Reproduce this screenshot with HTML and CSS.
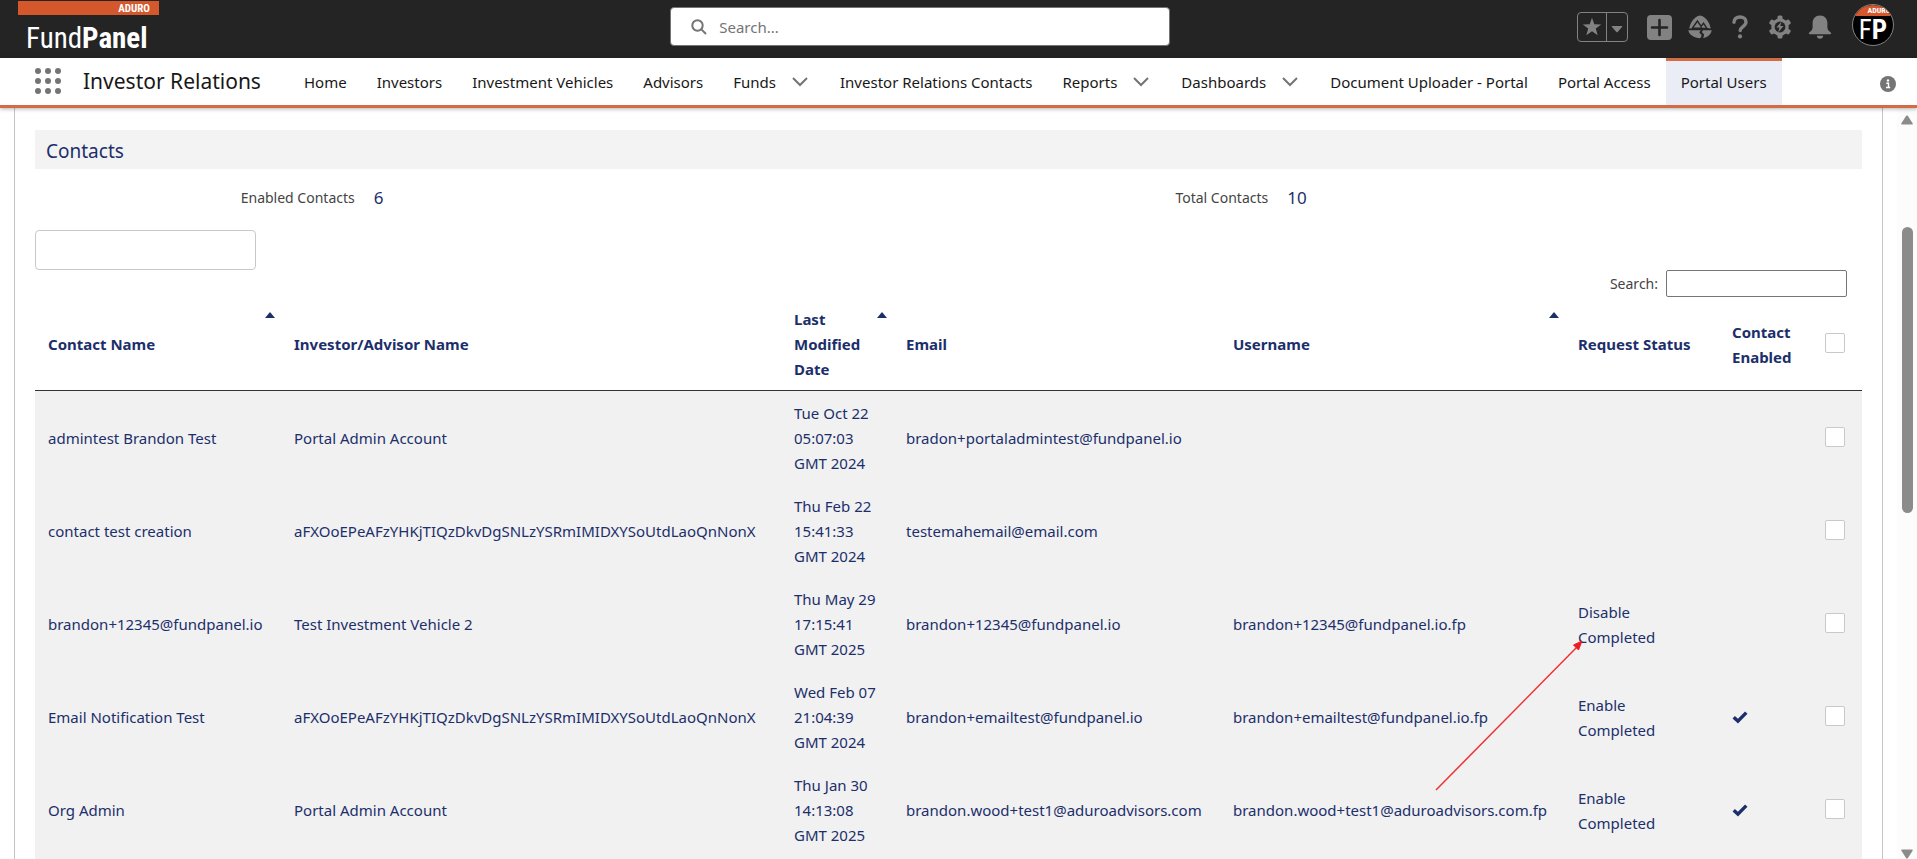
FILE: index.html
```html
<!DOCTYPE html>
<html lang="en">
<head>
  <meta charset="utf-8">
  <title>Portal Users | FundPanel</title>
  <link rel="stylesheet" href="styles.css">
</head>
<body>
  <header class="topbar">
    <a class="logo" href="#">
      <span class="logo-tag">ADURO</span>
      <span class="logo-name">Fund<b>Panel</b></span>
    </a>
    <div class="global-search">
      <svg width="16" height="16" viewBox="0 0 16 16" fill="none" stroke="#747474" stroke-width="2"><circle cx="6.5" cy="6.5" r="5.2"/><path d="M10.4 10.4L15 15"/></svg>
      <input type="text" placeholder="Search..." aria-label="Search">
    </div>
    <div class="actions">
      <div class="favorites">
        <button class="icon-button" aria-label="Favorites">
          <svg width="20" height="20" viewBox="0 0 20 20"><path fill="#828282" d="M10 0.8l2.3 6.4 6.9.2-5.4 4.2 1.9 6.6L10 14.3l-5.7 3.9 1.9-6.6L.8 7.4l6.9-.2z"/></svg>
        </button>
        <button class="icon-button" aria-label="Favorites list">
          <svg width="12" height="8" viewBox="0 0 12 8"><path fill="#828282" d="M1.2 1h9.6q1 0 .4.8L6.7 7q-.7.7-1.4 0L.8 1.8Q.2 1 1.2 1z"/></svg>
        </button>
      </div>
      <button class="icon-button" aria-label="Global actions">
        <svg width="25" height="25" viewBox="0 0 25 25"><rect width="25" height="25" rx="4" fill="#828282"/><path d="M12.5 5v15M5 12.500h15" stroke="#242424" stroke-width="2.600" stroke-linecap="round"/></svg>
      </button>
      <button class="icon-button" aria-label="Guidance center">
        <svg width="24" height="24" viewBox="0 0 24 24"><path fill="#828282" d="M1.300 13.500C2.200 7.500 6.500 1.500 12 .6c5.500.9 9.800 6.900 10.700 12.900L19.500 13l-4-6-2.300 3.300L9.400 4.800 3.300 13.500z"/><path fill="#828282" d="M9.400 7.200l3.600 5.300H5.800zM15.500 9.400l2.200 3.300h-3.500l-.6-.9z"/><path fill="#828282" d="M.3 15.200h12.600c-2 1.700-1.800 2.700-.2 3.800 1.300 1 1 2.300-.6 4.300C6 22.600 1.200 20 .3 15.200zM15.200 15.200h8.500c-.6 4.300-4.400 7.200-8.700 7.800 1.600-2.600 1.400-3.700-.3-4.900-1-.8-.9-1.700.5-2.900z"/></svg>
      </button>
      <button class="icon-button" aria-label="Help">
        <svg width="24" height="24" viewBox="0 0 24 24"><path fill="none" stroke="#828282" stroke-width="3.400" stroke-linecap="round" d="M6 7.200C6 3.800 8.500 2 12 2s6 2 6 5c0 4.500-5.800 4.600-5.800 8.600"/><circle cx="12" cy="21.400" r="2.100" fill="#828282"/></svg>
      </button>
      <button class="icon-button" aria-label="Setup">
        <svg width="24" height="24" viewBox="0 0 24 24"><g fill="#828282"><circle cx="12" cy="12" r="8.700"/><rect x="9.500" y=".5" width="5" height="23" rx="1.500"/><rect x="9.500" y=".5" width="5" height="23" rx="1.500" transform="rotate(60 12 12)"/><rect x="9.500" y=".5" width="5" height="23" rx="1.500" transform="rotate(120 12 12)"/></g><circle cx="12" cy="12" r="5.400" fill="#242424"/><path fill="#828282" d="M13.500 6.500L8.500 12.600h3l-1.300 4.900 5.300-6.400h-3.200z"/></svg>
      </button>
      <button class="icon-button" aria-label="Notifications">
        <svg width="24" height="24" viewBox="0 0 24 24"><path fill="#828282" d="M12 .5c4.600 0 7.400 3.500 7.400 7.500v4c0 2.800 1 3.800 2.800 4.900 1.400.9 1.300 2.300-.2 2.300H2c-1.500 0-1.600-1.400-.2-2.300 1.800-1.100 2.800-2.100 2.800-4.900V8C4.600 4 7.400.5 12 .5zM8.800 20.700h6.400c0 1.900-1.400 3-3.200 3s-3.200-1.100-3.200-3z"/></svg>
      </button>
      <button class="avatar" aria-label="View profile">
        <span class="avatar-tag">ADURO</span>
        <span class="avatar-name">F<b>P</b></span>
      </button>
    </div>
  </header>

  <nav class="navbar">
    <button class="launcher" aria-label="App launcher">
      <i></i><i></i><i></i><i></i><i></i><i></i><i></i><i></i><i></i>
    </button>
    <span class="app-name">Investor Relations</span>
    <a class="tab" href="#">Home</a>
    <a class="tab" href="#">Investors</a>
    <a class="tab" href="#">Investment Vehicles</a>
    <a class="tab" href="#">Advisors</a>
    <a class="tab" href="#">Funds <svg class="chevron" viewBox="0 0 16 10"><path d="M1 1l7 7 7-7"/></svg></a>
    <a class="tab" href="#">Investor Relations Contacts</a>
    <a class="tab" href="#">Reports <svg class="chevron" viewBox="0 0 16 10"><path d="M1 1l7 7 7-7"/></svg></a>
    <a class="tab" href="#">Dashboards <svg class="chevron" viewBox="0 0 16 10"><path d="M1 1l7 7 7-7"/></svg></a>
    <a class="tab" href="#">Document Uploader - Portal</a>
    <a class="tab" href="#">Portal Access</a>
    <a class="tab active" href="#">Portal Users</a>
    <button class="info" aria-label="Information">
      <svg width="16" height="16" viewBox="0 0 16 16"><circle cx="8" cy="8" r="8" fill="#747474"/><circle cx="8" cy="4.500" r="1.200" fill="#fff"/><path d="M6.300 7.300h2.200v4M6 11.500h4.200" stroke="#fff" stroke-width="1.400" fill="none"/></svg>
    </button>
  </nav>

  <main class="page">
    <div class="card">
      <h2 class="section-title">Contacts</h2>
      <dl class="summary">
        <div class="summary-item"><dt>Enabled Contacts</dt><dd>6</dd></div>
        <div class="summary-item"><dt>Total Contacts</dt><dd>10</dd></div>
      </dl>
      <input class="filter" type="text" aria-label="Filter">
      <div class="table-search">
        <label for="search">Search:</label>
        <input id="search" type="search">
      </div>
      <table class="contacts">
        <colgroup>
          <col class="col-name">
          <col class="col-investor">
          <col class="col-date">
          <col class="col-email">
          <col class="col-username">
          <col class="col-status">
          <col class="col-enabled">
          <col class="col-select">
        </colgroup>
        <thead>
          <tr>
            <th class="sorted">Contact Name</th>
            <th>Investor/Advisor Name</th>
            <th class="sorted">Last Modified Date</th>
            <th>Email</th>
            <th class="sorted">Username</th>
            <th>Request Status</th>
            <th>Contact Enabled</th>
            <th><input type="checkbox" aria-label="Select all"></th>
          </tr>
        </thead>
        <tbody>
          <tr>
            <td>admintest Brandon Test</td>
            <td>Portal Admin Account</td>
            <td>Tue Oct 22<br>05:07:03<br>GMT 2024</td>
            <td>bradon+portaladmintest@fundpanel.io</td>
            <td></td>
            <td></td>
            <td></td>
            <td><input type="checkbox" aria-label="Select admintest Brandon Test"></td>
          </tr>
          <tr>
            <td>contact test creation</td>
            <td>aFXOoEPeAFzYHKjTIQzDkvDgSNLzYSRmIMIDXYSoUtdLaoQnNonX</td>
            <td>Thu Feb 22<br>15:41:33<br>GMT 2024</td>
            <td>testemahemail@email.com</td>
            <td></td>
            <td></td>
            <td></td>
            <td><input type="checkbox" aria-label="Select contact test creation"></td>
          </tr>
          <tr>
            <td>brandon+12345@fundpanel.io</td>
            <td>Test Investment Vehicle 2</td>
            <td>Thu May 29<br>17:15:41<br>GMT 2025</td>
            <td>brandon+12345@fundpanel.io</td>
            <td>brandon+12345@fundpanel.io.fp</td>
            <td>Disable<br>Completed</td>
            <td></td>
            <td><input type="checkbox" aria-label="Select brandon+12345@fundpanel.io"></td>
          </tr>
          <tr>
            <td>Email Notification Test</td>
            <td>aFXOoEPeAFzYHKjTIQzDkvDgSNLzYSRmIMIDXYSoUtdLaoQnNonX</td>
            <td>Wed Feb 07<br>21:04:39<br>GMT 2024</td>
            <td>brandon+emailtest@fundpanel.io</td>
            <td>brandon+emailtest@fundpanel.io.fp</td>
            <td>Enable<br>Completed</td>
            <td><svg class="check" viewBox="0 0 14 12"><path d="M1.500 6.200l3.700 3.400 7.300-7.400"/></svg></td>
            <td><input type="checkbox" aria-label="Select Email Notification Test"></td>
          </tr>
          <tr>
            <td>Org Admin</td>
            <td>Portal Admin Account</td>
            <td>Thu Jan 30<br>14:13:08<br>GMT 2025</td>
            <td>brandon.wood+test1@aduroadvisors.com</td>
            <td>brandon.wood+test1@aduroadvisors.com.fp</td>
            <td>Enable<br>Completed</td>
            <td><svg class="check" viewBox="0 0 14 12"><path d="M1.500 6.200l3.700 3.400 7.300-7.400"/></svg></td>
            <td><input type="checkbox" aria-label="Select Org Admin"></td>
          </tr>
        </tbody>
      </table>
    </div>
    <div class="scrollbar">
      <svg width="12" height="10" viewBox="0 0 12 10"><path fill="#8b8b8b" d="M5.200.8q.8-.8 1.600 0l4.800 7.400q.5 1.300-.6 1.300H1Q-.1 9.500.4 8.200z"/></svg>
      <div class="track"><div class="thumb"></div></div>
      <svg width="12" height="10" viewBox="0 0 12 10"><path fill="#8b8b8b" d="M5.200 9.200q.8.800 1.600 0l4.800-7.400Q12.100.5 11 .5H1Q-.1.500.4 1.800z"/></svg>
    </div>
  </main>

  <!-- pointer to the request status -->
  <svg class="pointer" width="150" height="152" viewBox="0 0 150 152">
    <path d="M1 150L142 7" stroke="#f03030" stroke-width="1.500"/>
    <path d="M147 1l-8.500 4 5 5z" fill="#ed1c24" stroke="#ed1c24"/>
  </svg>
</body>
</html>
```
FILE: styles.css
```css
* {
  box-sizing: border-box;
}

body {
  margin: 0;
  height: 100vh;
  display: flex;
  flex-direction: column;
  overflow: hidden;
  background: #fff;
  color: #181818;
  font-family: "Noto Sans", "Open Sans", sans-serif;
  font-size: 14px;
}

button {
  padding: 0;
  border: 0;
  background: none;
  font: inherit;
  cursor: pointer;
}

a {
  color: inherit;
  text-decoration: none;
}

svg {
  display: block;
}

/* top bar */
.topbar {
  flex: none;
  height: 58px;
  display: grid;
  grid-template-columns: 473fr 500px 527fr;
  background: #242424;
}

.logo {
  padding-left: 18px;
  padding-top: 1px;
  color: #fff;
  font-family: "Liberation Sans Narrow", "Roboto Condensed", "Liberation Sans", sans-serif;
}

.logo-tag {
  display: block;
  width: 141px;
  height: 14px;
  padding-right: 9px;
  background: #d4582c;
  font-size: 11px;
  font-weight: bold;
  line-height: 15px;
  text-align: right;
}

.logo-name {
  display: block;
  padding-left: 8px;
  font-size: 29px;
  line-height: 46px;
}

.global-search {
  height: 39px;
  margin-top: 7px;
  padding: 0 20px;
  display: flex;
  align-items: center;
  gap: 12px;
  background: #fff;
  border: 1px solid #747474;
  border-radius: 4px;
}

.global-search input {
  flex: 1;
  padding: 0;
  border: 0;
  outline: 0;
  font: inherit;
  font-size: 15px;
}

.global-search input::placeholder {
  color: #747474;
}

.actions {
  height: 54px;
  display: flex;
  justify-content: flex-end;
  align-items: center;
  gap: 16px;
  padding-right: 23px;
}

.favorites {
  display: flex;
  height: 30px;
  border: 1px solid #828282;
  border-radius: 4px;
  margin-right: 3px;
}

.favorites .icon-button {
  width: 28px;
  display: flex;
  justify-content: center;
  align-items: center;
}

.favorites .icon-button + .icon-button {
  width: 21px;
  padding-top: 4px;
  border-left: 1px solid #828282;
}

.avatar {
  width: 42px;
  height: 42px;
  margin-left: 4px;
  margin-bottom: 4px;
  overflow: hidden;
  background: #000;
  border: 1px solid #828282;
  border-radius: 50%;
  color: #fff;
  font-family: "Liberation Sans Narrow", "Roboto Condensed", "Liberation Sans", sans-serif;
}

.avatar-tag {
  display: block;
  height: 11px;
  padding-left: 12px;
  background: #d4582c;
  font-size: 8px;
  font-weight: bold;
  line-height: 11px;
}

.avatar-name {
  display: block;
  font-size: 27px;
  line-height: 29px;
}

/* navigation */
.navbar {
  flex: none;
  height: 50px;
  display: flex;
  align-items: stretch;
  padding-left: 35px;
  padding-right: 21px;
  border-bottom: 3px solid #d46c43;
  box-shadow: 0 1px 4px rgba(0, 0, 0, 0.3);
  position: relative;
}

.launcher {
  display: grid;
  grid-template-columns: repeat(3, 6px);
  gap: 4px;
  align-content: center;
  padding-bottom: 2px;
}

.launcher i {
  width: 6px;
  height: 6px;
  border-radius: 50%;
  background: #747474;
}

.app-name {
  width: 228px;
  padding-left: 22px;
  font-size: 21px;
  line-height: 47px;
  white-space: nowrap;
}

.tab {
  display: flex;
  align-items: center;
  padding: 0 15px;
  border-top: 3px solid transparent;
  padding-bottom: 3px;
  font-size: 15px;
  white-space: nowrap;
}

.tab.active {
  background: #eaedf6;
  border-top-color: #d46c43;
}

.chevron {
  width: 16px;
  height: 10px;
  margin-left: 16px;
  margin-right: 2px;
  fill: none;
  stroke: #747474;
  stroke-width: 2;
}

.info {
  margin-left: auto;
  padding-top: 5px;
}

/* page */
.page {
  flex: 1;
  min-height: 0;
  display: flex;
  padding-left: 14px;
}

.card {
  flex: 1;
  overflow: hidden;
  margin-right: 14px;
  padding: 22px 20px 0;
  border-left: 1px solid #c4c4c4;
  border-right: 1px solid #c4c4c4;
}

.section-title {
  margin: 0;
  padding-top: 3px;
  padding-left: 11px;
  background: #f3f3f3;
  color: #1c2f6b;
  font-size: 19px;
  font-weight: normal;
  line-height: 36px;
}

.summary {
  display: grid;
  grid-template-columns: 1fr 1fr;
  margin: 17px 0 20px;
  line-height: 24px;
}

.summary-item {
  display: flex;
}

.summary dt {
  width: 35%;
  color: #444;
  text-align: right;
}

.summary dd {
  margin-left: 19px;
  color: #1c2f6b;
  font-size: 17px;
}

.filter {
  display: block;
  width: 221px;
  height: 40px;
  border: 1px solid #c9c9c9;
  border-radius: 4px;
}

.table-search {
  display: flex;
  justify-content: flex-end;
  align-items: center;
  gap: 8px;
  padding-right: 15px;
  color: #444;
}

.table-search input {
  width: 181px;
  height: 27px;
  border: 1px solid #767676;
  border-radius: 2px;
}

.contacts {
  width: 100%;
  table-layout: fixed;
  border-spacing: 0;
  border-bottom: 10px solid #f1f1f1;
  color: #1c2f6b;
  font-size: 15px;
  line-height: 25px;
}

.col-name { width: 246px; }
.col-investor { width: 500px; }
.col-date { width: 112px; }
.col-email { width: 327px; }
.col-username { width: 345px; }
.col-status { width: 154px; }
.col-enabled { width: 93px; }

.contacts th {
  position: relative;
  padding: 10px 0 8px 13px;
  border-bottom: 1px solid #333;
  text-align: left;
}

.contacts td {
  padding: 10px 0 8px 13px;
  background: #f1f1f1;
}

.contacts .sorted::after {
  content: "";
  position: absolute;
  top: 15px;
  right: 6px;
  border: 5px solid transparent;
  border-top: 0;
  border-bottom: 6px solid #1c2f6b;
}

.contacts input {
  display: block;
  appearance: none;
  width: 20px;
  height: 20px;
  margin: 0 0 3px;
  background: #fff;
  border: 1px solid #c9c9c9;
  border-radius: 2px;
}

.check {
  width: 16px;
  height: 14px;
  margin-bottom: 2px;
  fill: none;
  stroke: #1c2f6b;
  stroke-width: 3;
}

.scrollbar {
  width: 20px;
  display: flex;
  flex-direction: column;
  align-items: center;
  padding: 7px 0 0;
  background: #fcfcfc;
}

.track {
  flex: 1;
  padding-top: 102px;
}

.thumb {
  width: 11px;
  height: 46%;
  background: #8b8b8b;
  border-radius: 6px;
}

.pointer {
  position: absolute;
  left: 1435px;
  top: 640px;
}
```
